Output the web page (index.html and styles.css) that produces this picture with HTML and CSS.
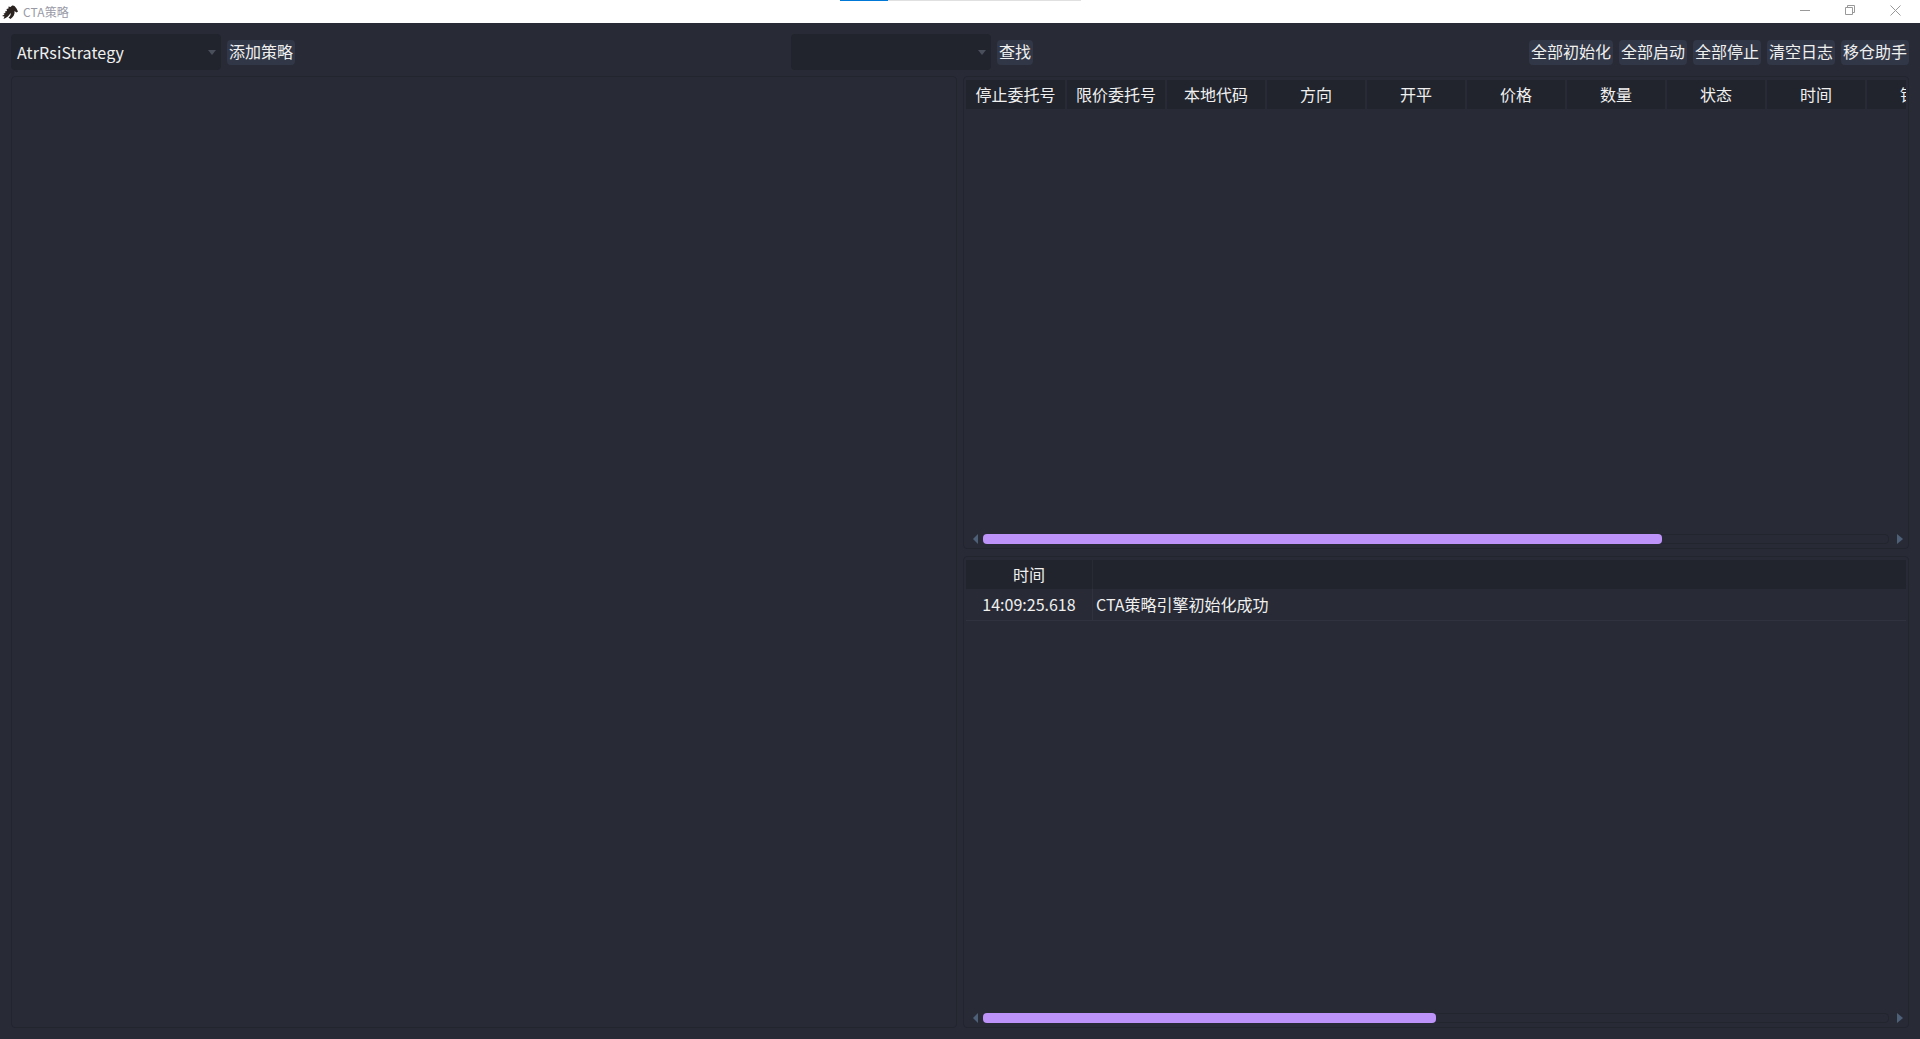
FILE: index.html
```html
<!DOCTYPE html>
<html lang="zh-CN">
<head>
<meta charset="UTF-8" />
<title>CTA策略</title>
<link rel="stylesheet" href="styles.css">
</head>
<body>

<div class="titlebar">
  <svg class="app-icon" width="16" height="16" viewBox="0 0 16 16">
    <path d="M0 12 L2.500 10.500 L1.500 9.500 L3.500 9 L3 7.500 L5 7 L4.500 5 L6.500 4.500 L6.500 2.500 L8.500 3 C9.500 1.500 11 1 12.500 2 L14.500 4.500 L16 7.500 L14.500 8.500 L12.500 7 C13 10 11.500 13 8.500 15 L6.500 13.500 C8.500 12 9 10.500 8.500 9 C7 12 4.500 14 1.500 15 L2.500 12.500 Z" fill="#2a2320"/>
  </svg>
  <span class="app-title">CTA策略</span>
  <div class="progress"><div class="progress-value"></div></div>
  <div class="win-buttons">
    <svg width="10" height="10" viewBox="0 0 10 10"><path d="M0 5.500 H10" stroke="#999" fill="none"/></svg>
    <svg width="10" height="10" viewBox="0 0 10 10"><path d="M0.500 2.500 H7.500 V9.500 H0.500 Z M2.500 2.500 V0.500 H9.500 V7.500 H7.500" stroke="#999" fill="none"/></svg>
    <svg width="11" height="11" viewBox="0 0 11 11"><path d="M0.500 0.500 L10.500 10.500 M10.500 0.500 L0.500 10.500" stroke="#999" fill="none"/></svg>
  </div>
</div>

<div class="main">
  <div class="toolbar">
    <div class="combo class-combo">
      <span>AtrRsiStrategy</span>
      <i class="combo-arrow"></i>
    </div>
    <button class="btn">添加策略</button>
    <div class="combo find-combo">
      <i class="combo-arrow"></i>
    </div>
    <button class="btn">查找</button>
    <div class="toolbar-right">
      <button class="btn">全部初始化</button>
      <button class="btn">全部启动</button>
      <button class="btn">全部停止</button>
      <button class="btn">清空日志</button>
      <button class="btn">移仓助手</button>
    </div>
  </div>

  <div class="content">
    <div class="panel strategy-panel"></div>

    <div class="right-col">
      <div class="panel table-panel stop-panel">
        <div class="table-head">
          <div class="th th-first">停止委托号</div>
          <div class="th">限价委托号</div>
          <div class="th">本地代码</div>
          <div class="th">方向</div>
          <div class="th">开平</div>
          <div class="th">价格</div>
          <div class="th">数量</div>
          <div class="th">状态</div>
          <div class="th">时间</div>
          <div class="th">锁仓</div>
        </div>
        <div class="table-body"></div>
        <div class="hscroll">
          <i class="arrow-left"></i>
          <div class="track"><div class="thumb thumb-stop"></div></div>
          <i class="arrow-right"></i>
        </div>
      </div>

      <div class="panel table-panel">
        <div class="table-head">
          <div class="th th-time">时间</div>
          <div class="th th-fill"></div>
        </div>
        <div class="log-row">
          <div class="td-time">14:09:25.618</div>
          <div class="td-msg">CTA策略引擎初始化成功</div>
        </div>
        <div class="table-body"></div>
        <div class="hscroll">
          <i class="arrow-left"></i>
          <div class="track"><div class="thumb thumb-log"></div></div>
          <i class="arrow-right"></i>
        </div>
      </div>
    </div>
  </div>
</div>

</body>
</html>
```

FILE: styles.css
```css
* {
  margin: 0;
  padding: 0;
  box-sizing: border-box;
  font-family: "Noto Sans CJK SC", "Noto Sans", sans-serif;
}

html, body {
  height: 100%;
  overflow: hidden;
}

body {
  display: flex;
  flex-direction: column;
  background-color: #282b36;
  color: #f0f0f0;
  font-size: 16px;
}

.titlebar {
  position: relative;
  flex: none;
  display: flex;
  align-items: center;
  height: 23px;
  padding-left: 2px;
  background-color: #fff;
}

.app-title {
  margin-left: 5px;
  color: #9a9aa6;
  font-size: 12px;
  letter-spacing: 0.1px;
}

.progress {
  position: absolute;
  top: 0;
  left: 840px;
  width: 241px;
  height: 1px;
  background-color: #e0e0e0;
}

.progress-value {
  width: 48px;
  height: 1px;
  background-color: #0078d7;
}

.win-buttons {
  margin-left: auto;
  display: flex;
  align-items: center;
  gap: 35px;
  padding: 0 19px 3px 0;
}

.main {
  flex: 1;
  display: flex;
  flex-direction: column;
  min-height: 0;
  padding: 11px;
}

.toolbar {
  flex: none;
  display: flex;
  align-items: center;
  gap: 6px;
  height: 36px;
}

.combo {
  position: relative;
  height: 36px;
  line-height: 36px;
  padding-left: 6px;
  border-radius: 4px;
  background-color: #21242c;
  letter-spacing: 0.1px;
}

.class-combo {
  width: 210px;
}

.find-combo {
  width: 200px;
  margin-left: 490px;
}

.combo-arrow {
  position: absolute;
  right: 5px;
  top: 16px;
  border-left: 4px solid transparent;
  border-right: 4px solid transparent;
  border-top: 5px solid #4a4f5c;
}

.btn {
  height: 25px;
  padding: 0 2px 2px;
  border: none;
  border-radius: 4px;
  background-color: #313746;
  color: #f0f0f0;
  font-size: 16px;
  line-height: 23px;
}

.toolbar-right {
  margin-left: auto;
  display: flex;
  gap: 6px;
}

.content {
  flex: 1;
  display: flex;
  gap: 6px;
  min-height: 0;
  margin-top: 6px;
}

.panel {
  border: 1px solid #22252e;
  border-radius: 4px;
}

.strategy-panel {
  flex: none;
  width: 946px;
}

.right-col {
  flex: 1;
  display: flex;
  flex-direction: column;
  gap: 7px;
  min-width: 0;
}

.table-panel {
  flex: 1;
  display: flex;
  flex-direction: column;
  min-height: 0;
  padding: 3px 2px 4px 2px;
}

.stop-panel {
  flex: none;
  height: 473px;
}

.table-head {
  flex: none;
  display: flex;
  height: 29px;
  overflow: hidden;
}

.th {
  flex: none;
  width: 100px;
  border-right: 2px solid #282b36;
  background-color: #21242c;
  line-height: 28px;
  text-align: center;
  white-space: nowrap;
}

.th-first {
  width: 101px;
}

.th-time {
  width: 127px;
  border-right-width: 1px;
}

.th-fill {
  flex: 1;
  border-right: none;
}

.table-body {
  flex: 1;
}

.log-row {
  flex: none;
  display: flex;
  height: 32px;
  border-bottom: 1px solid #30333f;
  line-height: 31px;
}

.td-time {
  width: 127px;
  border-right: 1px solid #30333f;
  text-align: center;
}

.td-msg {
  padding-left: 3px;
}

.hscroll {
  flex: none;
  display: flex;
  align-items: center;
  height: 10px;
  padding: 0 3px 0 7px;
}

.arrow-left {
  width: 0;
  height: 0;
  border-top: 5px solid transparent;
  border-bottom: 5px solid transparent;
  border-right: 5px solid #4d6078;
}

.arrow-right {
  width: 0;
  height: 0;
  border-top: 5px solid transparent;
  border-bottom: 5px solid transparent;
  border-left: 6px solid #4d6078;
  margin-left: 8px;
}

.track {
  flex: 1;
  height: 10px;
  margin-left: 5px;
  border: 1px solid #22252e;
  border-radius: 4px;
}

.thumb {
  height: 10px;
  margin: -1px 0 0 -1px;
  border-radius: 4px;
  background-color: #bd93f9;
}

.thumb-stop {
  width: 679px;
}

.thumb-log {
  width: 453px;
}
```
